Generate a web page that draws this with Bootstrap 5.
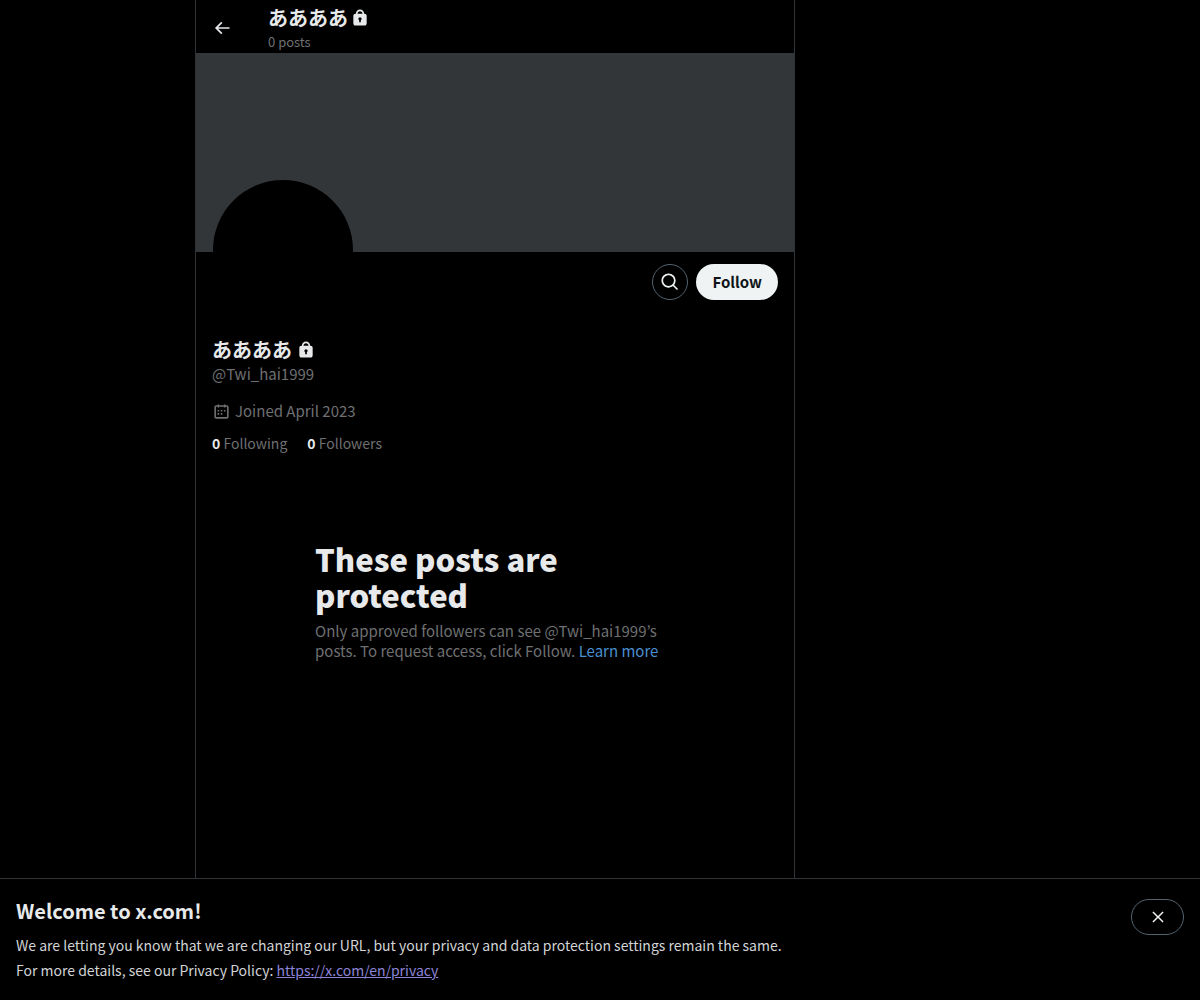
<!DOCTYPE html>
<html lang="en">
<head>
<meta charset="utf-8">
<meta name="viewport" content="width=device-width, initial-scale=1">
<title>ああああ (@Twi_hai1999) / X</title>
<link rel="stylesheet" href="https://cdn.jsdelivr.net/npm/bootstrap@5.3.0/dist/css/bootstrap.min.css">
<style>
body{background:#000;color:#e7e9ea;font-family:"Noto Sans CJK JP",sans-serif;font-size:15px;line-height:20px}
svg{fill:currentColor;display:block;flex:none}
a{text-decoration:none}
.side-start{flex:13 1 0}
.side-end{flex:27 1 0}
.timeline{flex:0 1 600px;min-width:0;border:solid #2f3336;border-width:0 1px}
.topbar{height:53px;padding-top:2px}
.back-link{width:56px;color:#e7e9ea}
.muted-text{color:#6e7072}
.name-line{font-size:20px;line-height:24px;font-weight:700}
.name-tight{gap:2px}
.posts-count{font-size:13px;line-height:16px}
.banner{height:199px;background:#333639;overflow:hidden}
.avatar{display:block;width:140px;height:140px;border-radius:50%;background:#000;top:127px;left:17px}
.pill{height:36px;border-radius:18px;border:1px solid #536471;background:#000;color:#eff3f4;padding:0}
.pill-search{width:36px}
.pill-follow{background:#eff3f4;border:0;color:#0f1419;font-weight:700;padding:0 16px}
.pill-close{width:53px}
.actions{height:82px}
.handle{margin:2px 0 17px}
.stats{font-size:14px}
.stats a{color:#6e7072}
.stats b{color:#e7e9ea}
.notice{max-width:360px;margin-top:88px}
.notice h2{font-size:31px;line-height:36px;font-weight:800}
.notice a{color:#4a8fd0}
.notice p,.body-large{font-size:15px}
.cookie-bar{background:#000;border-top:1px solid #2f3336;padding:20px 16px 17px}
.cookie-bar h2{font-size:20px;line-height:24px;font-weight:700;margin-bottom:10px}
.cookie-bar p{line-height:25px;font-size:14px;color:#d2d4d6}
.cookie-bar p a{color:#8c84d8;text-decoration:underline}
</style>
<script src="https://cdn.jsdelivr.net/npm/bootstrap@5.3.0/dist/js/bootstrap.bundle.min.js"></script>
</head>
<body>
<div class="d-flex min-vh-100">
<div class="side-start"></div>
<main class="timeline">
<header class="topbar d-flex align-items-center px-3">
<a class="back-link" href="#" aria-label="Back"><svg width="20" height="20" viewBox="0 0 24 24"><path d="M7.414 13l5.043 5.04-1.414 1.42L3.586 12l7.457-7.46 1.414 1.42L7.414 11H21v2H7.414z"/></svg></a>
<div>
<div class="name-line name-tight d-flex align-items-center mb-1"><span>ああああ</span><svg width="20" height="20" viewBox="0 0 24 24"><path d="M17.5 7H17v-.25c0-2.76-2.24-5-5-5s-5 2.24-5 5V7h-.5C5.12 7 4 8.12 4 9.5v9C4 19.88 5.12 21 6.5 21h11c1.39 0 2.5-1.12 2.5-2.5v-9C20 8.12 18.89 7 17.5 7zM13 14.73V17h-2v-2.27c-.59-.34-1-.99-1-1.73 0-1.1.9-2 2-2 1.11 0 2 .9 2 2 0 .74-.4 1.39-1 1.73zM15 7H9v-.25c0-1.66 1.35-3 3-3 1.66 0 3 1.34 3 3V7z"/></svg></div>
<div class="posts-count muted-text">0 posts</div>
</div>
</header>
<div class="banner position-relative"><a class="avatar position-absolute" href="#" aria-label="Profile photo"></a></div>
<section class="px-3">
<div class="actions d-flex justify-content-end align-items-start gap-2 pt-2 mt-1">
<button class="pill pill-search d-flex align-items-center justify-content-center" type="button" aria-label="Search"><svg width="20" height="20" viewBox="0 0 24 24"><path d="M10.25 3.75c-3.59 0-6.5 2.91-6.5 6.5s2.91 6.5 6.5 6.5c1.795 0 3.419-.726 4.596-1.904 1.178-1.177 1.904-2.801 1.904-4.596 0-3.59-2.91-6.5-6.5-6.5zm-8.5 6.5c0-4.694 3.806-8.5 8.5-8.5s8.5 3.806 8.5 8.5c0 1.986-.682 3.815-1.824 5.262l4.781 4.781-1.414 1.414-4.781-4.781c-1.447 1.142-3.276 1.824-5.262 1.824-4.694 0-8.5-3.806-8.5-8.5z"/></svg></button>
<button class="pill pill-follow" type="button">Follow</button>
</div>
<h1 class="name-line d-flex align-items-center gap-1 mb-0"><span>ああああ</span><svg width="20" height="20" viewBox="0 0 24 24"><path d="M17.5 7H17v-.25c0-2.76-2.24-5-5-5s-5 2.24-5 5V7h-.5C5.12 7 4 8.12 4 9.5v9C4 19.88 5.12 21 6.5 21h11c1.39 0 2.5-1.12 2.5-2.5v-9C20 8.12 18.89 7 17.5 7zM13 14.73V17h-2v-2.27c-.59-.34-1-.99-1-1.73 0-1.1.9-2 2-2 1.11 0 2 .9 2 2 0 .74-.4 1.39-1 1.73zM15 7H9v-.25c0-1.66 1.35-3 3-3 1.66 0 3 1.34 3 3V7z"/></svg></h1>
<div class="body-large muted-text handle">@Twi_hai1999</div>
<div class="body-large muted-text d-flex align-items-center gap-1 mb-2"><svg width="19" height="19" viewBox="0 0 24 24"><path d="M7 4V3h2v1h6V3h2v1h1.5C19.89 4 21 5.12 21 6.5v12c0 1.38-1.11 2.5-2.5 2.5h-13C4.12 21 3 19.88 3 18.5v-12C3 5.12 4.12 4 5.5 4H7zm0 2H5.5c-.27 0-.5.22-.5.5v12c0 .28.23.5.5.5h13c.28 0 .5-.22.5-.5v-12c0-.28-.22-.5-.5-.5H17v1h-2V6H9v1H7V6zm0 6h2v-2H7v2zm0 4h2v-2H7v2zm4-4h2v-2h-2v2zm0 4h2v-2h-2v2zm4-4h2v-2h-2v2z"/></svg><span>Joined April 2023</span></div>
<div class="stats d-flex pt-1"><a class="me-3 pe-1" href="#"><b>0</b> Following</a><a href="#"><b>0</b> Followers</a></div>
</section>
<section class="notice mx-auto">
<h2 class="mb-2">These posts are protected</h2>
<p class="muted-text">Only approved followers can see @Twi_hai1999’s posts. To request access, click Follow. <a href="#">Learn more</a></p>
</section>
</main>
<div class="side-end"></div>
</div>
<aside class="cookie-bar fixed-bottom d-flex justify-content-between align-items-start">
<div><h2>Welcome to x.com!</h2>
<p class="mb-0">We are letting you know that we are changing our URL, but your privacy and data protection settings remain the same.<br>For more details, see our Privacy Policy: <a href="#">https://x.com/en/privacy</a></p></div>
<button class="pill pill-close d-flex align-items-center justify-content-center" type="button" aria-label="Close"><svg width="18" height="18" viewBox="0 0 24 24"><path d="M10.59 12L4.54 5.96l1.42-1.42L12 10.59l6.04-6.05 1.42 1.42L13.41 12l6.05 6.04-1.42 1.42L12 13.41l-6.04 6.05-1.42-1.42L10.59 12z"/></svg></button>
</aside>
</body>
</html>
